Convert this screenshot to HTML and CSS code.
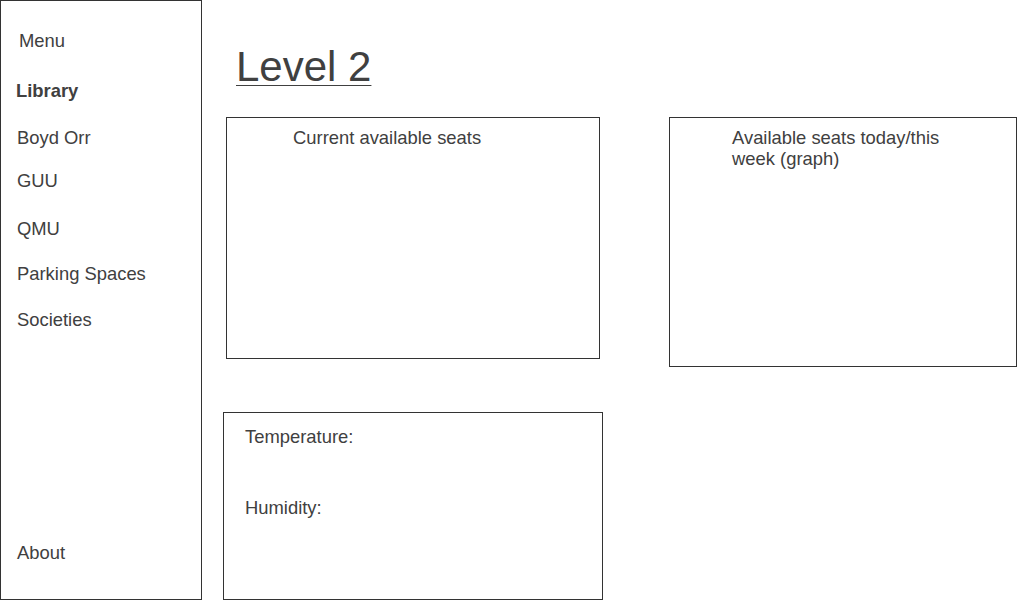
FILE: index.html
```html
<!DOCTYPE html>
<html lang="en">
<head>
<meta charset="utf-8">
<title>Level 2</title>
<link rel="stylesheet" href="styles.css">
</head>
<body>
<div class="page">
  <nav class="sidebar">
    <div class="nav-item nav-menu">Menu</div>
    <div class="nav-item nav-library">Library</div>
    <div class="nav-item nav-boyd">Boyd Orr</div>
    <div class="nav-item nav-guu">GUU</div>
    <div class="nav-item nav-qmu">QMU</div>
    <div class="nav-item nav-parking">Parking Spaces</div>
    <div class="nav-item nav-societies">Societies</div>
    <div class="nav-item nav-about">About</div>
  </nav>
  <main class="main">
    <h1 class="title">Level 2</h1>
    <div class="row">
      <section class="box box-current">
        <div class="box-label">Current available seats</div>
      </section>
      <section class="box box-graph">
        <div class="box-label graph-label">Available seats today/this week (graph)</div>
      </section>
    </div>
    <section class="box box-env">
      <div class="env-line">Temperature:</div>
      <div class="env-line env-humidity">Humidity:</div>
    </section>
  </main>
</div>
</body>
</html>
```
FILE: styles.css
```css
* {
  box-sizing: border-box;
}

html, body {
  margin: 0;
  padding: 0;
  background: #ffffff;
}

body {
  font-family: "Liberation Sans", Arial, sans-serif;
  font-size: 18.4px;
  line-height: 21px;
  color: #404040;
}

.page {
  display: flex;
  width: 1024px;
  height: 600px;
  overflow: hidden;
}

.sidebar {
  flex: 0 0 202px;
  height: 600px;
  border: 1px solid #333333;
  display: flex;
  flex-direction: column;
  padding: 29px 0 36px 0;
}

.nav-item {
  height: 21px;
  padding-left: 16px;
  white-space: nowrap;
}

.nav-menu { padding-left: 18px; }
.nav-library { margin-top: 29px; padding-left: 15px; font-weight: bold; }
.nav-boyd { margin-top: 26px; }
.nav-guu { margin-top: 22px; }
.nav-qmu { margin-top: 27px; }
.nav-parking { margin-top: 24px; }
.nav-societies { margin-top: 25px; }
.nav-about { margin-top: auto; }

.main {
  flex: 1;
  display: flex;
  flex-direction: column;
  padding: 43px 7px 0 21px;
}

.title {
  margin: 0 0 0 13px;
  font-size: 42px;
  line-height: 48px;
  font-weight: normal;
  text-decoration: underline;
  text-decoration-thickness: 1px;
  text-underline-offset: 4px;
}

.row {
  display: flex;
  align-items: flex-start;
  gap: 69px;
  margin-top: 26px;
}

.box {
  border: 1px solid #333333;
}

.box-current {
  width: 374px;
  height: 242px;
  margin-left: 3px;
  padding: 9px 0 0 66px;
}

.box-graph {
  width: 348px;
  height: 250px;
  padding: 9px 0 0 62px;
}

.graph-label {
  max-width: 220px;
}

.box-env {
  width: 380px;
  height: 188px;
  margin-top: 45px;
  padding: 13px 0 0 21px;
}

.env-humidity {
  margin-top: 50px;
}
```
